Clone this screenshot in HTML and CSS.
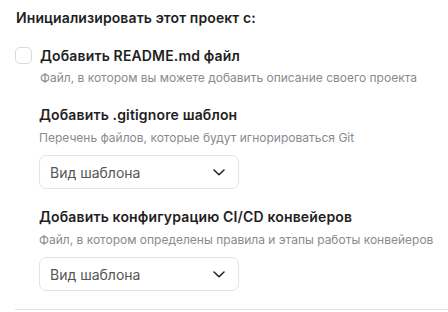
FILE: index.html
```html
<!DOCTYPE html>
<html lang="ru">
<head>
<meta charset="utf-8">
<link rel="stylesheet" href="styles.css">
</head>
<body>
<div class="panel">
  <h2 class="title">Инициализировать этот проект с:</h2>
  <label class="check-row">
    <span class="checkbox"></span>
    <span class="check-text">
      <span class="label">Добавить README.md файл</span>
      <span class="desc desc-check">Файл, в котором вы можете добавить описание своего проекта</span>
    </span>
  </label>
  <div class="group">
    <div class="label">Добавить .gitignore шаблон</div>
    <div class="desc">Перечень файлов, которые будут игнорироваться Git</div>
    <div class="select">
      <span>Вид шаблона</span>
      <svg width="12" height="7" viewBox="0 0 12 7"><path d="M1 1 L6 5.8 L11 1" fill="none" stroke="#1f1f1f" stroke-width="1.5" stroke-linecap="round" stroke-linejoin="round"/></svg>
    </div>
  </div>
  <div class="group">
    <div class="label">Добавить конфигурацию CI/CD конвейеров</div>
    <div class="desc">Файл, в котором определены правила и этапы работы конвейеров</div>
    <div class="select">
      <span>Вид шаблона</span>
      <svg width="12" height="7" viewBox="0 0 12 7"><path d="M1 1 L6 5.8 L11 1" fill="none" stroke="#1f1f1f" stroke-width="1.5" stroke-linecap="round" stroke-linejoin="round"/></svg>
    </div>
  </div>
  <div class="divider"></div>
</div>
</body>
</html>
```
FILE: styles.css
```css
html, body {
  margin: 0;
  padding: 0;
  background: #ffffff;
}
body {
  font-family: Inter, "Noto Sans", sans-serif;
  color: #1f1f1f;
  width: 448px;
  height: 312px;
  overflow: hidden;
}
.panel {
  padding: 9px 0 0 15px;
}
.title {
  margin: 0 0 0 1px;
  font-size: 14px;
  font-weight: 600;
  line-height: 18px;
  letter-spacing: 0.1px;
}
.check-row {
  display: flex;
  gap: 8px;
  margin-top: 20px;
}
.checkbox {
  flex: none;
  width: 15px;
  height: 15px;
  border: 1px solid #d9d9dc;
  border-radius: 5px;
}
.check-text {
  display: flex;
  flex-direction: column;
}
.label {
  font-size: 14px;
  font-weight: 600;
  line-height: 18px;
  letter-spacing: 0.15px;
}
.desc {
  font-size: 12px;
  color: #8a8a8e;
  line-height: 16px;
  margin-top: 6px;
}
.desc-check {
  margin-top: 5px;
}
.group {
  margin-left: 24px;
  margin-top: 20px;
}
.group + .group {
  margin-top: 19px;
}
.select {
  box-sizing: border-box;
  width: 200px;
  height: 34px;
  margin-top: 9px;
  border: 1px solid #e3e3e6;
  border-radius: 7px;
  display: flex;
  align-items: center;
  justify-content: space-between;
  padding: 0 13px 0 10px;
  font-size: 14px;
  color: #555558;
}
.divider {
  margin-top: 18px;
  height: 1px;
  background: #e3e3e6;
}
```
